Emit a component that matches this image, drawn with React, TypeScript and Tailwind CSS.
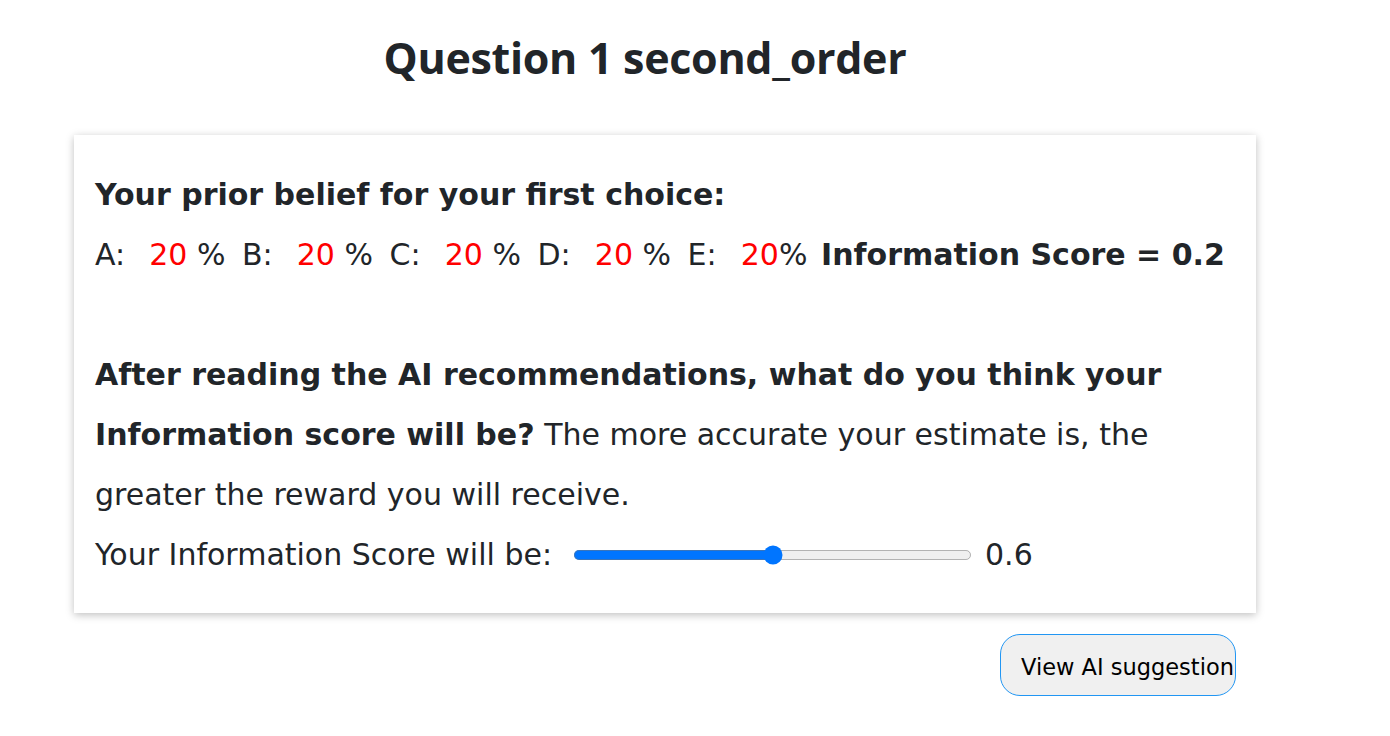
import React, { useState } from 'react';

const Red: React.FC<{ children: React.ReactNode }> = ({ children }) => (
  <span className="text-[#ff0000] ml-[5px]">{children}</span>
);

const App: React.FC = () => {
  const [score, setScore] = useState(0.6);
  const prior = [
    { label: 'A', value: 20 },
    { label: 'B', value: 20 },
    { label: 'C', value: 20 },
    { label: 'D', value: 20 },
    { label: 'E', value: 20 },
  ];

  return (
    <div className="min-h-screen bg-white text-[#212529] font-['DejaVu_Sans',Verdana,sans-serif]">
      <div className="pl-[74px] w-[1216px] text-center pt-[31px]">
        <h1 className="font-['Open_Sans',sans-serif] font-bold text-[43px] leading-[54px] tracking-[-0.3px]">Question 1 second_order</h1>
      </div>

      <div className="ml-[74px] mt-[50px] w-[1182px] bg-white shadow-[0_2px_8px_rgba(0,0,0,0.25)] px-[21px] pt-[30px] pb-[28px] text-[30px] leading-[60px]">
        <p className="font-bold">Your prior belief for your first choice:</p>
        <p className="whitespace-pre">
          {prior.map((p, i) => (
            <React.Fragment key={p.label}>
              {p.label}:{'  '}
              <Red>{p.value}</Red>
              {i < prior.length - 1 ? (
                <>
                  {' '}
                  <span className="mr-[7px]">%</span>{' '}
                </>
              ) : (
                <>
                  <span className="mr-[4px]">%</span>{' '}
                </>
              )}
            </React.Fragment>
          ))}
          <span className="font-bold">Information Score = 0.2</span>
        </p>
        <div className="h-[60px]" />
        <p>
          <span className="font-bold">
            After reading the AI recommendations, what do you think your Information score will be?
          </span>{' '}
          The more accurate your estimate is, the greater the reward you will receive.
        </p>
        <div className="flex items-center h-[60px]">
          <span>Your Information Score will be:</span>
          <input
            type="range"
            min={0}
            max={1.2}
            step={0.1}
            value={score}
            onChange={(e) => setScore(parseFloat(e.target.value))}
            className="[zoom:1.25] ml-[17px] w-[319px]"
          />
          <span className="ml-[13px]">{score.toFixed(1)}</span>
        </div>
      </div>

      <div className="w-[1236px] flex justify-end mt-[21px]">
        <button className="w-[236px] h-[62px] rounded-[20px] border border-[#2196f3] bg-[#f0f0f0] text-[22.5px] text-black pl-[20px] pt-[5px] text-left whitespace-nowrap overflow-hidden">
          View AI suggestion
        </button>
      </div>
    </div>
  );
};

export default App;
